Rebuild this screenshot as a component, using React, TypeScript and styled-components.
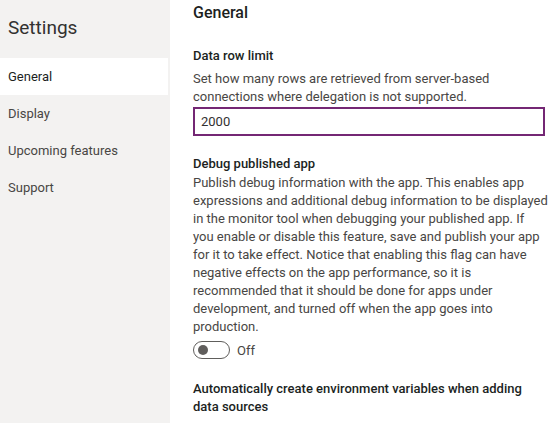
import React, { useState } from "react";
import styled, { createGlobalStyle } from "styled-components";

const GlobalStyle = createGlobalStyle`
  html, body {
    margin: 0;
    padding: 0;
    background: #ffffff;
  }
  body {
    font-family: Roboto, "Liberation Sans", sans-serif;
    color: #323130;
  }
`;

const navItems = ["General", "Display", "Upcoming features", "Support"];

const App = () => {
  const [selected, setSelected] = useState("General");
  const [rowLimit, setRowLimit] = useState("2000");
  const [debugOn, setDebugOn] = useState(false);

  return (
    <>
      <GlobalStyle />
      <PageStyled>
        <SidebarStyled>
          <SidebarTitle>Settings</SidebarTitle>
          <NavList>
            {navItems.map((item) => (
              <NavItem
                key={item}
                $active={item === selected}
                onClick={() => setSelected(item)}
              >
                {item}
              </NavItem>
            ))}
          </NavList>
        </SidebarStyled>

        <ContentStyled>
          <PageHeading>General</PageHeading>

          <SectionStyled $gap={22}>
            <SettingLabel>Data row limit</SettingLabel>
            <SettingText $top={5}>
              Set how many rows are retrieved from server-based
              <br />
              connections where delegation is not supported.
            </SettingText>
            <RowLimitInput
              value={rowLimit}
              onChange={(e) => setRowLimit(e.target.value)}
            />
          </SectionStyled>

          <SectionStyled $gap={19}>
            <SettingLabel>Debug published app</SettingLabel>
            <SettingText $top={1}>
              Publish debug information with the app. This enables app
              <br />
              expressions and additional debug information to be displayed
              <br />
              in the monitor tool when debugging your published app. If
              <br />
              you enable or disable this feature, save and publish your app
              <br />
              for it to take effect. Notice that enabling this flag can have
              <br />
              negative effects on the app performance, so it is
              <br />
              recommended that it should be done for apps under
              <br />
              development, and turned off when the app goes into
              <br />
              production.
            </SettingText>
            <ToggleRow>
              <ToggleTrack
                $on={debugOn}
                onClick={() => setDebugOn(!debugOn)}
                aria-pressed={debugOn}
              >
                <ToggleKnob $on={debugOn} />
              </ToggleTrack>
              <ToggleLabel>{debugOn ? "On" : "Off"}</ToggleLabel>
            </ToggleRow>
          </SectionStyled>

          <SectionStyled $gap={21}>
            <SettingLabel>
              Automatically create environment variables when adding
              <br />
              data sources
            </SettingLabel>
          </SectionStyled>
        </ContentStyled>
      </PageStyled>
    </>
  );
};

export default App;

const PageStyled = styled.div`
  display: flex;
  width: 548px;
  height: 423px;
  overflow: hidden;
`;

const SidebarStyled = styled.div`
  display: flex;
  flex-direction: column;
  width: 170px;
  flex-shrink: 0;
  background-color: #f3f2f1;
  padding-right: 2px;
  box-sizing: border-box;
`;

const SidebarTitle = styled.div`
  font-size: 19px;
  line-height: 28px;
  color: #323130;
  padding: 14px 0 0 8px;
  height: 58px;
  box-sizing: border-box;
`;

const NavList = styled.div`
  display: flex;
  flex-direction: column;
`;

const NavItem = styled.div<{ $active: boolean }>`
  height: 37px;
  display: flex;
  align-items: center;
  padding-left: 8px;
  font-size: 13px;
  color: ${(p) => (p.$active ? "#201f1e" : "#484644")};
  background-color: ${(p) => (p.$active ? "#ffffff" : "transparent")};
  cursor: pointer;
`;

const ContentStyled = styled.div`
  flex: 1;
  min-width: 0;
  display: flex;
  flex-direction: column;
  padding-left: 23px;
  color: #323130;
`;

const PageHeading = styled.div`
  font-size: 16px;
  font-weight: 500;
  line-height: 24px;
  padding-top: 1px;
  color: #201f1e;
`;

const SectionStyled = styled.div<{ $gap: number }>`
  display: flex;
  flex-direction: column;
  margin-top: ${(p) => p.$gap}px;
`;

const SettingLabel = styled.div`
  font-size: 13px;
  font-weight: 500;
  line-height: 18px;
  color: #201f1e;
  white-space: nowrap;
`;

const SettingText = styled.div<{ $top: number }>`
  font-size: 13px;
  line-height: 18px;
  color: #484644;
  margin-top: ${(p) => p.$top}px;
  white-space: nowrap;
`;

const RowLimitInput = styled.input`
  margin-top: 1px;
  height: 29px;
  width: 352px;
  box-sizing: border-box;
  border: 2px solid #742774;
  padding: 0 6px;
  font-family: inherit;
  font-size: 13px;
  color: #323130;
  outline: none;
`;

const ToggleRow = styled.div`
  display: flex;
  align-items: center;
  gap: 7px;
  margin-top: 5px;
`;

const ToggleTrack = styled.button<{ $on: boolean }>`
  position: relative;
  width: 37px;
  height: 18px;
  padding: 0;
  border-radius: 10px;
  border: 1px solid ${(p) => (p.$on ? "#742774" : "#605e5c")};
  background-color: ${(p) => (p.$on ? "#742774" : "#ffffff")};
  cursor: pointer;
`;

const ToggleKnob = styled.span<{ $on: boolean }>`
  position: absolute;
  top: 3px;
  left: ${(p) => (p.$on ? "21px" : "4px")};
  width: 10px;
  height: 10px;
  border-radius: 50%;
  background-color: ${(p) => (p.$on ? "#ffffff" : "#605e5c")};
`;

const ToggleLabel = styled.span`
  font-size: 13px;
  color: #484644;
`;
